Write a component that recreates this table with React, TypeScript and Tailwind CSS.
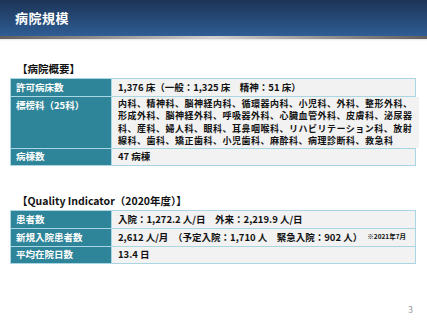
const font = { fontFamily: '"Noto Sans CJK JP", "Noto Sans", sans-serif' };

const Row = ({ label, children, tall }: { label: string; children: React.ReactNode; tall?: boolean }) => (
  <div className="grid grid-cols-[101px_1fr] border-t border-[#a9d6e2] first:border-t-0">
    <div className={`bg-[#2e8599] text-white font-bold px-[5px] ${tall ? "pt-[1px]" : "flex items-center"} border-r border-[#a9d6e2]`}>
      {label}
    </div>
    <div className={`bg-[#f2f2f2] px-[6px] text-[#111] font-bold ${tall ? "" : "flex items-center"}`}>
      {children}
    </div>
  </div>
);

export default function App() {
  return (
    <div className="w-[427px] h-[320px] bg-white relative overflow-hidden text-[9.5px]" style={font}>
      <div className="h-[36px] bg-gradient-to-b from-[#1c3457] to-[#2f5d94] flex items-center px-[15px]">
        <h1 className="text-white font-bold text-[13px] tracking-[0.5px]">病院規模</h1>
      </div>
      <div className="h-[3px] bg-gradient-to-r from-[#5f5f5f] via-[#cfcfcf] to-[#5f5f5f]" />
      <div className="h-[2px] bg-gradient-to-b from-[#e6e6e6] to-white" />

      <div className="px-[10px] pr-[11px]">
        <div className="mt-[21px] h-[14px] pl-[7px] font-bold text-[10.5px] text-[#111] leading-[14px]">【病院概要】</div>
        <div className="mt-[2px] border border-[#a9d6e2]">
          <div className="h-[17px] grid"><Row label="許可病床数">1,376 床（一般：1,325 床　精神：51 床）</Row></div>
          <Row label="標榜科（25科）" tall>
            <div className="whitespace-nowrap text-[9px] tracking-[0.5px] leading-[12.5px] pt-[0.5px]">
              内科、精神科、脳神経内科、循環器内科、小児科、外科、整形外科、<br />
              形成外科、脳神経外科、呼吸器外科、心臓血管外科、皮膚科、泌尿器<br />
              科、産科、婦人科、眼科、耳鼻咽喉科、リハビリテーション科、放射<br />
              線科、歯科、矯正歯科、小児歯科、麻酔科、病理診断科、救急科
            </div>
          </Row>
          <div className="h-[17px] grid border-t border-[#a9d6e2]"><Row label="病棟数">47 病棟</Row></div>
        </div>

        <div className="mt-[28px] h-[14px] pl-[7px] font-bold text-[10.5px] text-[#111] leading-[14px]">【Quality Indicator（2020年度）】</div>
        <div className="mt-[2px] border border-[#a9d6e2]">
          <div className="h-[17px] grid"><Row label="患者数">入院：1,272.2 人/日　外来：2,219.9 人/日</Row></div>
          <div className="h-[18px] grid border-t border-[#a9d6e2]">
            <Row label="新規入院患者数">
              <span className="flex-1">2,612 人/月　（予定入院：1,710 人　緊急入院：902 人）</span>
              <span className="text-[6.5px] pr-[3px]">※2021年7月</span>
            </Row>
          </div>
          <div className="h-[17px] grid border-t border-[#a9d6e2]"><Row label="平均在院日数">13.4 日</Row></div>
        </div>
      </div>

      <div className="absolute right-[14px] bottom-[4px] text-[9px] text-[#9a9a9a]">3</div>
    </div>
  );
}
